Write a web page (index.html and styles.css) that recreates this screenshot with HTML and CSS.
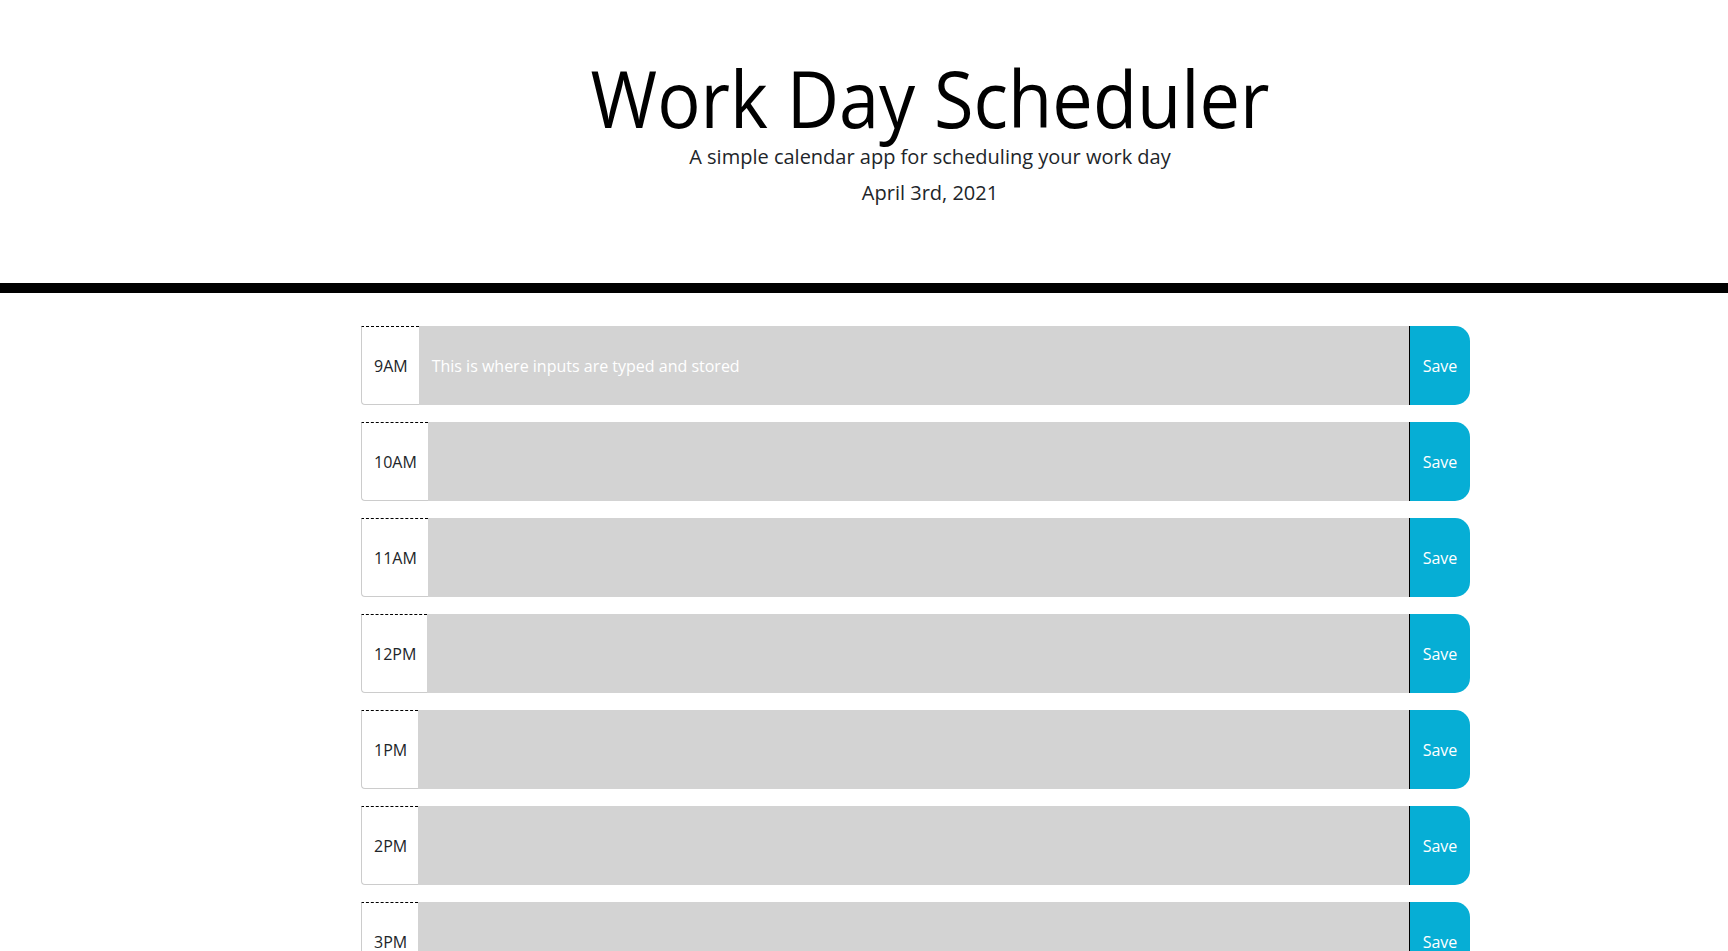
FILE: index.html
```html
<!DOCTYPE html>
<html lang="en">
<head>
<meta charset="UTF-8">
<title>Work Day Scheduler</title>
<link rel="stylesheet" href="styles.css">
</head>
<body>
<header class="jumbotron">
  <h1 class="title">Work Day Scheduler</h1>
  <p class="lead">A simple calendar app for scheduling your work day</p>
  <p class="lead date">April 3rd, 2021</p>
</header>
<main class="container">
  <div class="time-block"><div class="hour">9AM</div><textarea class="description" placeholder="This is where inputs are typed and stored"></textarea><button class="saveBtn">Save</button></div>
  <div class="time-block"><div class="hour">10AM</div><textarea class="description"></textarea><button class="saveBtn">Save</button></div>
  <div class="time-block"><div class="hour">11AM</div><textarea class="description"></textarea><button class="saveBtn">Save</button></div>
  <div class="time-block"><div class="hour">12PM</div><textarea class="description"></textarea><button class="saveBtn">Save</button></div>
  <div class="time-block"><div class="hour">1PM</div><textarea class="description"></textarea><button class="saveBtn">Save</button></div>
  <div class="time-block"><div class="hour">2PM</div><textarea class="description"></textarea><button class="saveBtn">Save</button></div>
  <div class="time-block"><div class="hour">3PM</div><textarea class="description"></textarea><button class="saveBtn">Save</button></div>
  <div class="time-block"><div class="hour">4PM</div><textarea class="description"></textarea><button class="saveBtn">Save</button></div>
  <div class="time-block"><div class="hour">5PM</div><textarea class="description"></textarea><button class="saveBtn">Save</button></div>
</main>
</body>
</html>
```
FILE: styles.css
```css
html, body {
  margin: 0;
  padding: 0;
}
body {
  font-family: "Open Sans", "Liberation Sans", sans-serif;
  color: #212529;
  background: #ffffff;
  overflow: hidden;
}
.jumbotron {
  padding: 54px 0 75px 132px;
  text-align: center;
  border-bottom: 10px solid #000000;
  margin: 0 0 33px 0;
}
.title {
  margin: 0;
  font-size: 78px;
  font-weight: 400;
  line-height: 88px;
  color: #000000;
  transform: scaleX(0.925);
}
.lead {
  margin: 0;
  font-size: 20px;
  font-weight: 400;
  line-height: 30px;
}
.date {
  margin-top: 6px;
}
.container {
  margin-left: 361px;
  width: 1109px;
}
.time-block {
  display: flex;
  height: 79px;
  margin-bottom: 17px;
}
.hour {
  display: flex;
  align-items: center;
  padding: 0 11px 0 12px;
  background: #ffffff;
  color: #212529;
  font-size: 16px;
  border-top: 1px dashed #000000;
  border-left: 1px solid #cccccc;
  border-bottom: 1px solid #cccccc;
  border-radius: 0 0 0 4px;
}
.description {
  flex: 1;
  margin: 0;
  border: none;
  resize: none;
  background: #d3d3d3;
  color: #ffffff;
  font-family: "Open Sans", "Liberation Sans", sans-serif;
  font-size: 16px;
  line-height: 24px;
  padding: 28px 13px 0 13px;
  outline: none;
}
.description::placeholder {
  color: #ffffff;
  opacity: 1;
}
.saveBtn {
  width: 61px;
  margin: 0;
  border: none;
  border-left: 1px solid #000000;
  border-radius: 0 15px 15px 0;
  background: #06aed5;
  color: #ffffff;
  font-family: "Open Sans", "Liberation Sans", sans-serif;
  font-size: 16px;
  padding: 0;
}
```
